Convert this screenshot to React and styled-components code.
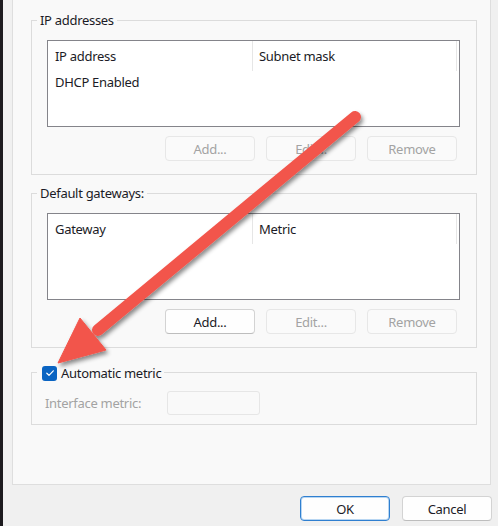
import React from 'react'
import styled, { createGlobalStyle } from "styled-components";

const GlobalStyle = createGlobalStyle`
  html, body {
    margin: 0;
    padding: 0;
    background: #f0f0f0;
  }
  * { box-sizing: border-box; }
`;

const Window = styled.div`
  position: relative;
  width: 498px;
  height: 526px;
  overflow: hidden;
  background: #f0f0f0;
  border-left: 3px solid #1c1a1e;
  font-family: "Noto Sans", "Open Sans", sans-serif;
  font-size: 13px;
  letter-spacing: -0.3px;
  color: #1b1b26;
`;

const Panel = styled.div`
  display: flex;
  flex-direction: column;
  margin-left: 9px;
  width: 479px;
  height: 485px;
  padding: 20px 13px 0 18px;
  background: #f9f9f9;
  border: 1px solid #dedede;
  border-top: none;
`;

const GroupBox = styled.div`
  display: flex;
  flex-direction: column;
  margin-top: ${p => p.$gap || 0}px;
  padding: 0 16px ${p => p.$bottom || 13}px 15px;
  border: 1px solid #dcdcdc;
`;

const Caption = styled.div`
  display: flex;
  align-items: center;
  gap: 4px;
  width: fit-content;
  height: 16px;
  line-height: 16px;
  margin: ${p => p.$check ? -8 : -9}px 0 0 -10px;
  padding: 0 3px 0 ${p => p.$check ? 5 : 3}px;
  background: #f9f9f9;
`;

const ListBox = styled.div`
  margin-top: 12px;
  height: 87px;
  background: #fff;
  border: 1px solid #84848a;
`;

const HeaderRow = styled.div`
  display: flex;
  height: 30px;
`;

const HeaderCell = styled.div`
  display: flex;
  align-items: center;
  width: ${p => p.$w}px;
  padding-left: 6px;
  border-right: 1px solid #e6e6e6;
  &:first-child { padding-left: 7px; }
`;

const ListRow = styled.div`
  height: 22px;
  line-height: 22px;
  padding-left: 7px;
`;

const ButtonRow = styled.div`
  display: flex;
  justify-content: flex-end;
  gap: 11px;
  margin-top: 9px;
  padding-right: 3px;
`;

const Button = styled.button`
  width: 90px;
  height: 25px;
  padding: 0;
  font: inherit;
  letter-spacing: inherit;
  border-radius: 4px;
  border: 1px solid ${p => p.disabled ? '#e7e7e7' : '#d3d3d3'};
  border-bottom-color: ${p => p.disabled ? '#e7e7e7' : '#bdbdbd'};
  background: ${p => p.disabled ? '#fafafa' : '#fefefe'};
  color: ${p => p.disabled ? '#a3a3a3' : '#1b1b26'};
`;

const DefaultButton = styled(Button)`
  border: 1px solid #2f7fd0;
  box-shadow: inset 0 0 0 1px #b8d6f2;
`;

const CheckBox = styled.span`
  display: flex;
  align-items: center;
  justify-content: center;
  width: 15px;
  height: 15px;
  border-radius: 3px;
  background: #0a64c2;
`;

const MetricRow = styled.div`
  display: flex;
  align-items: center;
  margin: 10px 0 0 -2px;
  color: #a3a3a3;
`;

const MetricLabel = styled.span`
  width: 122px;
`;

const MetricInput = styled.div`
  width: 93px;
  height: 24px;
  border: 1px solid #e6e6e6;
  border-radius: 3px;
  background: #f9f9f9;
`;

const Footer = styled.div`
  display: flex;
  justify-content: flex-end;
  gap: 12px;
  padding: 11px 6px 0 0;
`;

const Annotation = styled.svg`
  position: absolute;
  left: -3px;
  top: 0;
  pointer-events: none;
`;

function Arrow() {
  return (
    <Annotation width="498" height="526" viewBox="0 0 498 526">
      <defs>
        <filter id="shadow" x="-20%" y="-20%" width="140%" height="140%">
          <feDropShadow dx="2" dy="3" stdDeviation="2" floodColor="#000" floodOpacity="0.45" />
        </filter>
      </defs>
      <g filter="url(#shadow)" fill="#f2554b" stroke="#f2554b">
        <line x1="355" y1="117" x2="98" y2="330" strokeWidth="12" strokeLinecap="round" />
        <polygon points="58,363 80,318 106,350" strokeWidth="1" strokeLinejoin="round" />
      </g>
    </Annotation>
  )
}

function App() {
  return (
    <Window>
      <GlobalStyle />
      <Panel>
        <GroupBox>
          <Caption>IP addresses</Caption>
          <ListBox>
            <HeaderRow>
              <HeaderCell $w={205}>IP address</HeaderCell>
              <HeaderCell $w={204}>Subnet mask</HeaderCell>
            </HeaderRow>
            <ListRow>DHCP Enabled</ListRow>
          </ListBox>
          <ButtonRow>
            <Button disabled>Add...</Button>
            <Button disabled>Edit...</Button>
            <Button disabled>Remove</Button>
          </ButtonRow>
        </GroupBox>

        <GroupBox $gap={18}>
          <Caption>Default gateways:</Caption>
          <ListBox>
            <HeaderRow>
              <HeaderCell $w={205}>Gateway</HeaderCell>
              <HeaderCell $w={204}>Metric</HeaderCell>
            </HeaderRow>
          </ListBox>
          <ButtonRow>
            <Button>Add...</Button>
            <Button disabled>Edit...</Button>
            <Button disabled>Remove</Button>
          </ButtonRow>
        </GroupBox>

        <GroupBox $gap={24} $bottom={9}>
          <Caption $check>
            <CheckBox>
              <svg width="10" height="10" viewBox="0 0 10 10">
                <path d="M1.8 5.2 L4 7.3 L8.3 2.8" fill="none" stroke="#fff" strokeWidth="1.2" strokeLinecap="round" strokeLinejoin="round" />
              </svg>
            </CheckBox>
            Automatic metric
          </Caption>
          <MetricRow>
            <MetricLabel>Interface metric:</MetricLabel>
            <MetricInput />
          </MetricRow>
        </GroupBox>
      </Panel>
      <Footer>
        <DefaultButton>OK</DefaultButton>
        <Button>Cancel</Button>
      </Footer>
      <Arrow />
    </Window>
  )
}

export default App
